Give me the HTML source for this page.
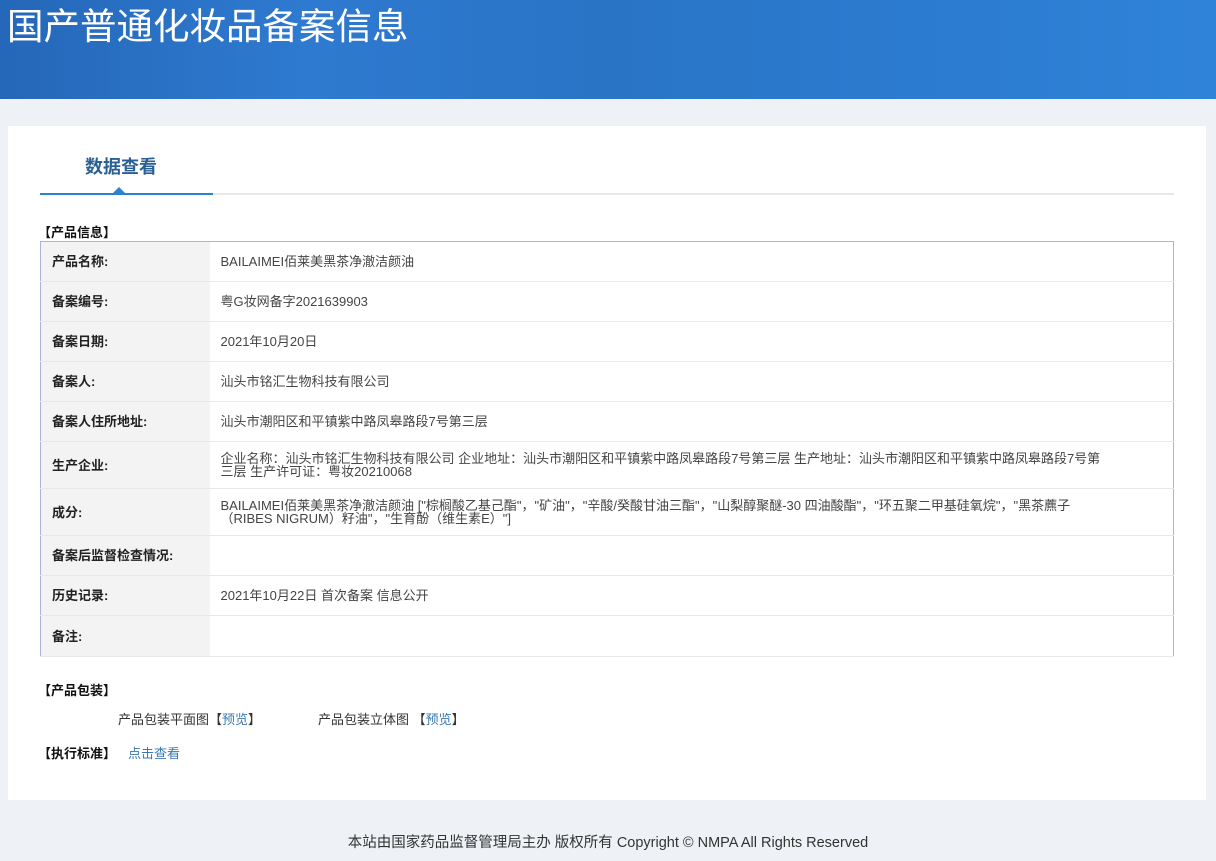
<!DOCTYPE html>
<html><head><meta charset="utf-8">
<style>
*{margin:0;padding:0;box-sizing:border-box}
body{width:1216px;height:861px;background:#eef2f6;font-family:"Liberation Sans","Noto Sans CJK SC",sans-serif;font-size:13px;color:#333;position:relative;overflow:hidden}
.hd{position:absolute;left:0;top:0;width:1216px;height:99px;background:linear-gradient(90deg,#2567b8 0%,#2e7ad0 25%,#2a74c6 50%,#2b7bd0 75%,#2f83d8 100%)}
.hd h1{position:absolute;left:7px;top:-3px;font-size:36.5px;font-weight:normal;color:#fff;font-family:"Noto Sans CJK SC",sans-serif;letter-spacing:0}
.panel{position:absolute;left:8px;top:126px;width:1198px;height:674px;background:#fff}
.tab{position:absolute;left:85px;top:153px;font-size:18px;font-weight:bold;color:#2a5f94}
.line{position:absolute;left:40px;top:193px;width:1134px;height:2px;background:#e6e8ea}
.line2{position:absolute;left:40px;top:193px;width:173px;height:2px;background:#2a83cc}
.tri{position:absolute;left:113px;top:187px;width:0;height:0;border-left:6px solid transparent;border-right:6px solid transparent;border-bottom:6px solid #2a83cc}
.sec{position:absolute;font-weight:bold;color:#111;font-size:13px}
table{position:absolute;left:40px;top:241px;width:1134px;border-collapse:collapse;border:1px solid #a9b4d6}
td{border-bottom:1px solid #e8e8e8;vertical-align:middle;line-height:13px}
td.l{width:169px;background:#f3f3f3;font-weight:bold;color:#222;padding-left:11px}
td.v{padding-left:11px;color:#444;font-size:13px}
a{color:#3a78b0;text-decoration:none}
.ft{position:absolute;top:831px;left:0;width:1216px;text-align:center;font-size:14.5px;color:#333}
</style></head><body>
<div class="hd"><h1>国产普通化妆品备案信息</h1></div>
<div class="panel"></div>
<div class="tab">数据查看</div>
<div class="line"></div><div class="line2"></div><div class="tri"></div>
<div class="sec" style="left:38px;top:222px">【产品信息】</div>
<table>
<tr style="height:40px"><td class="l">产品名称:</td><td class="v">BAILAIMEI佰莱美黑茶净澈洁颜油</td></tr>
<tr style="height:40px"><td class="l">备案编号:</td><td class="v">粤G妆网备字2021639903</td></tr>
<tr style="height:40px"><td class="l">备案日期:</td><td class="v">2021年10月20日</td></tr>
<tr style="height:40px"><td class="l">备案人:</td><td class="v">汕头市铭汇生物科技有限公司</td></tr>
<tr style="height:40px"><td class="l">备案人住所地址:</td><td class="v">汕头市潮阳区和平镇紫中路凤皋路段7号第三层</td></tr>
<tr style="height:47px"><td class="l">生产企业:</td><td class="v" style="padding-right:62px">企业名称：汕头市铭汇生物科技有限公司 企业地址：汕头市潮阳区和平镇紫中路凤皋路段7号第三层 生产地址：汕头市潮阳区和平镇紫中路凤皋路段7号第三层 生产许可证：粤妆20210068</td></tr>
<tr style="height:47px"><td class="l">成分:</td><td class="v" style="padding-right:62px">BAILAIMEI佰莱美黑茶净澈洁颜油 ["棕榈酸乙基己酯"，"矿油"，"辛酸/癸酸甘油三酯"，"山梨醇聚醚-30 四油酸酯"，"环五聚二甲基硅氧烷"，"黑茶藨子（RIBES NIGRUM）籽油"，"生育酚（维生素E）"]</td></tr>
<tr style="height:40px"><td class="l">备案后监督检查情况:</td><td class="v"></td></tr>
<tr style="height:40px"><td class="l">历史记录:</td><td class="v">2021年10月22日 首次备案 信息公开</td></tr>
<tr style="height:41px"><td class="l">备注:</td><td class="v"></td></tr>
</table>
<div class="sec" style="left:38px;top:680px">【产品包装】</div>
<div style="position:absolute;left:118px;top:709px">产品包装平面图【<a>预览</a>】</div>
<div style="position:absolute;left:318px;top:709px">产品包装立体图 【<a>预览</a>】</div>
<div class="sec" style="left:38px;top:743px">【执行标准】</div>
<div style="position:absolute;left:128px;top:743px"><a>点击查看</a></div>
<div class="ft">本站由国家药品监督管理局主办 版权所有 Copyright © NMPA All Rights Reserved</div>
</body></html>
